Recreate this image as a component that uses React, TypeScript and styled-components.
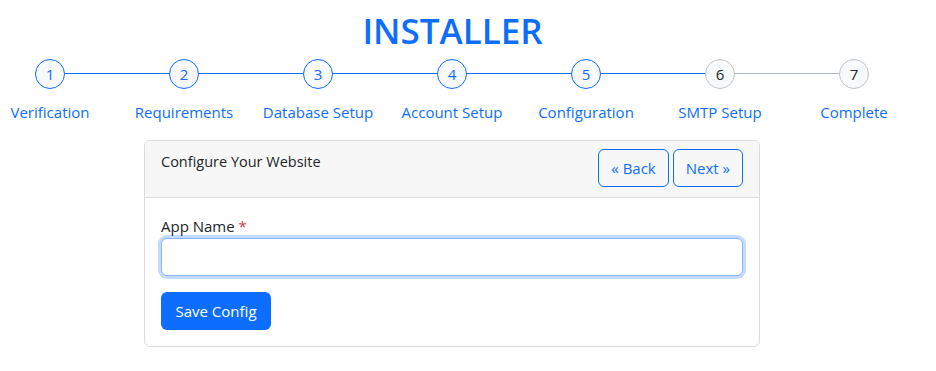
import React, { FunctionComponent, useState } from "react";
import styled, { createGlobalStyle } from "styled-components";

const GlobalStyle = createGlobalStyle`
  html, body {
    margin: 0;
    padding: 0;
    background: #ffffff;
    font-family: "Open Sans", "Noto Sans", sans-serif;
    color: #212529;
  }
  * {
    box-sizing: border-box;
  }
`;

const Palette = {
  primary: "#0d6efd",
  gray: "#adb5bd",
  border: "#dcdcdc",
};

const steps = [
  "Verification",
  "Requirements",
  "Database Setup",
  "Account Setup",
  "Configuration",
  "SMTP Setup",
  "Complete",
];

const CURRENT_STEP = 5;

const Styles = {
  Page: styled.div`
    width: 905px;
    height: 371px;
  `,
  Title: styled.h1`
    margin: 0;
    padding-top: 7px;
    height: 58px;
    text-align: center;
    font-size: 35px;
    line-height: 48px;
    font-weight: 600;
    color: ${Palette.primary};
  `,
  Steps: styled.div`
    display: grid;
    grid-template-columns: repeat(7, 134px);
    margin-left: -17px;
  `,
  Step: styled.div`
    display: flex;
    flex-direction: column;
    align-items: center;
  `,
  Track: styled.div`
    position: relative;
    width: 100%;
    height: 32px;
    display: flex;
    justify-content: center;
    align-items: center;
  `,
  Line: styled.div<{ $active: boolean; $side: "left" | "right" }>`
    position: absolute;
    top: 15px;
    height: 1px;
    width: 50%;
    ${(p) => (p.$side === "left" ? "left: 0;" : "right: 0;")}
    background: ${(p) => (p.$active ? Palette.primary : Palette.gray)};
  `,
  Circle: styled.div<{ $active: boolean }>`
    position: relative;
    z-index: 1;
    width: 30px;
    height: 30px;
    border-radius: 50%;
    border: 1px solid ${(p) => (p.$active ? Palette.primary : "#bfc3c8")};
    background: #f8f9fa;
    color: ${(p) => (p.$active ? Palette.primary : "#212529")};
    display: flex;
    align-items: center;
    justify-content: center;
    font-size: 15px;
  `,
  Label: styled.div`
    margin-top: 11px;
    font-size: 15px;
    line-height: 22px;
    color: ${Palette.primary};
    white-space: nowrap;
  `,
  Card: styled.div`
    width: 616px;
    margin: 17px 0 0 144px;
    border: 1px solid ${Palette.border};
    border-radius: 6px;
    overflow: hidden;
  `,
  CardHeader: styled.div`
    display: flex;
    justify-content: space-between;
    align-items: flex-start;
    padding: 8px 16px 10px 16px;
    background: #f7f7f7;
    border-bottom: 1px solid ${Palette.border};
  `,
  CardTitle: styled.div`
    padding-top: 2px;
    font-size: 14.5px;
    line-height: 22px;
  `,
  ButtonGroup: styled.div`
    display: flex;
    gap: 4px;
  `,
  OutlineButton: styled.button`
    height: 38px;
    padding: 0 12px;
    border: 1px solid ${Palette.primary};
    border-radius: 6px;
    background: transparent;
    color: ${Palette.primary};
    font-family: inherit;
    font-size: 15px;
    cursor: pointer;
  `,
  CardBody: styled.div`
    padding: 16px;
  `,
  FieldLabel: styled.label`
    display: block;
    font-size: 15px;
    line-height: 24px;
  `,
  Required: styled.span`
    color: #dc3545;
  `,
  Input: styled.input`
    display: block;
    width: 100%;
    height: 38px;
    padding: 6px 12px;
    border: 1px solid #86b7fe;
    border-radius: 6px;
    box-shadow: 0 0 0 3px rgba(13, 110, 253, 0.25);
    outline: none;
    font-family: inherit;
    font-size: 15px;
  `,
  PrimaryButton: styled.button`
    margin-top: 16px;
    height: 38px;
    padding: 0 14.5px;
    border: none;
    border-radius: 6px;
    background: ${Palette.primary};
    color: #ffffff;
    font-family: inherit;
    font-size: 15px;
    cursor: pointer;
  `,
};

const StepItem: FunctionComponent<{ index: number; label: string }> = ({
  index,
  label,
}) => {
  const number = index + 1;
  const active = number <= CURRENT_STEP;
  return (
    <Styles.Step>
      <Styles.Track>
        {index > 0 && <Styles.Line $side="left" $active={number <= CURRENT_STEP + 1} />}
        {index < steps.length - 1 && (
          <Styles.Line $side="right" $active={number <= CURRENT_STEP} />
        )}
        <Styles.Circle $active={active}>{number}</Styles.Circle>
      </Styles.Track>
      <Styles.Label>{label}</Styles.Label>
    </Styles.Step>
  );
};

export default function App() {
  const [appName, setAppName] = useState("");

  return (
    <Styles.Page>
      <GlobalStyle />
      <Styles.Title>INSTALLER</Styles.Title>

      <Styles.Steps>
        {steps.map((label, i) => (
          <StepItem key={label} index={i} label={label} />
        ))}
      </Styles.Steps>

      <Styles.Card>
        <Styles.CardHeader>
          <Styles.CardTitle>Configure Your Website</Styles.CardTitle>
          <Styles.ButtonGroup>
            <Styles.OutlineButton>« Back</Styles.OutlineButton>
            <Styles.OutlineButton>Next »</Styles.OutlineButton>
          </Styles.ButtonGroup>
        </Styles.CardHeader>

        <Styles.CardBody>
          <Styles.FieldLabel htmlFor="app-name">
            App Name <Styles.Required>*</Styles.Required>
          </Styles.FieldLabel>
          <Styles.Input
            id="app-name"
            value={appName}
            onChange={(e) => setAppName(e.target.value)}
          />
          <Styles.PrimaryButton>Save Config</Styles.PrimaryButton>
        </Styles.CardBody>
      </Styles.Card>
    </Styles.Page>
  );
}
